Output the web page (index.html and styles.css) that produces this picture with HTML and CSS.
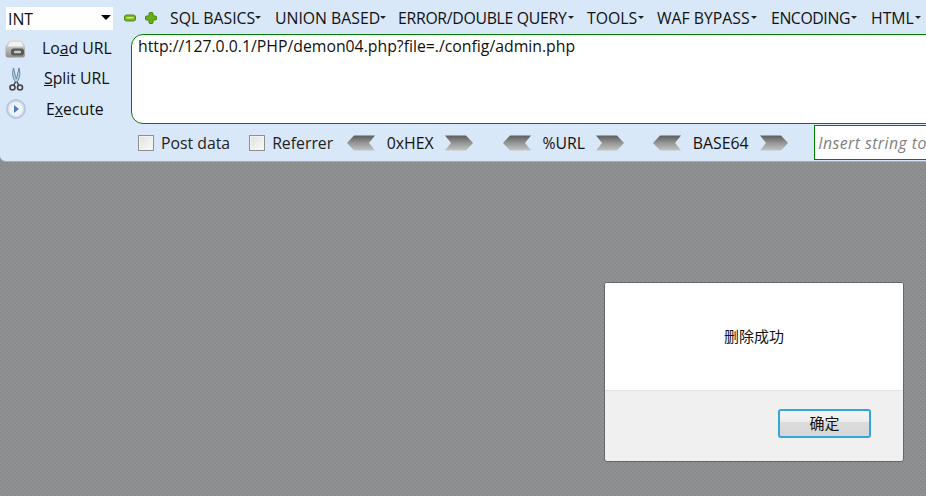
FILE: index.html
```html
<!doctype html>
<html lang="en">
  <head>
    <meta charset="UTF-8" />
    <title>HackBar</title>
    <link rel="stylesheet" href="styles.css">
  </head>
  <body>
    <div class="toolbar">
      <div class="top-row">
        <div class="select">INT<span class="select-arrow"></span></div>
        <svg class="zoom-icon" width="12" height="8" viewBox="0 0 12 8"><rect x="0.5" y="1" width="11" height="6" rx="2" fill="#7ab51d" stroke="#4f8a10"/><rect x="2.5" y="3" width="7" height="1.5" fill="#c8e68a"/></svg>
        <svg class="zoom-icon plus" width="12" height="12" viewBox="0 0 12 12"><path d="M4 1.5Q4 .5 5 .5h2q1 0 1 1V4h2.500q1 0 1 1v2q0 1-1 1H8v2.500q0 1-1 1H5q-1 0-1-1V8H1.500q-1 0-1-1V5q0-1 1-1H4z" fill="#6cae18" stroke="#3f8a0c"/></svg>
        <ul class="menu">
          <li class="sql">SQL BASICS</li>
          <li class="union">UNION BASED</li>
          <li class="error">ERROR/DOUBLE QUERY</li>
          <li class="tools">TOOLS</li>
          <li class="waf">WAF BYPASS</li>
          <li class="enc">ENCODING</li>
          <li class="html">HTML</li>
        </ul>
      </div>

      <div class="main-row">
        <div class="actions">
          <div class="action">
            <svg width="22" height="20" viewBox="0 0 22 20">
              <defs><linearGradient id="pr" x1="0" y1="0" x2="0" y2="1"><stop offset="0" stop-color="#e0e0e0"/><stop offset="1" stop-color="#8f8f8f"/></linearGradient></defs>
              <path d="M4.500 1h12l3.500 6.500V16a2.500 2.500 0 0 1-2.500 2.500h-15A2.500 2.500 0 0 1 .5 16V7.500z" fill="url(#pr)"/>
              <path d="M2.500 7.500L5 3h11l2.500 4.500z" fill="#f2f2f2"/>
              <rect x="6" y="9.500" width="13" height="7" rx="2.500" fill="#5a5a5a"/>
              <rect x="9" y="11.800" width="7" height="2.400" rx="1" fill="#c9c9c9"/>
            </svg>
            <span class="label load">Lo<u>a</u>d URL</span>
          </div>
          <div class="action">
            <svg width="22" height="24" viewBox="0 0 22 24">
              <path d="M8.500 1C7 6 7.500 11 10.500 15H12C15 11 15.500 6 14 1C13 5 12.300 9 11.300 12C10.300 9 9.500 5 8.500 1z" fill="#b6d2e8" stroke="#64849e"/>
              <path d="M10.500 15l-2 3.500M12 15l2 3.500" stroke="#444" stroke-width="1.500"/>
              <circle cx="7.500" cy="20.500" r="2.500" fill="none" stroke="#444" stroke-width="1.600"/>
              <circle cx="15" cy="20.500" r="2.500" fill="none" stroke="#444" stroke-width="1.600"/>
            </svg>
            <span class="label split"><u>S</u>plit URL</span>
          </div>
          <div class="action">
            <svg width="22" height="22" viewBox="0 0 22 22">
              <defs><radialGradient id="pl" cx="0.500" cy="0.500" r="0.500"><stop offset="0" stop-color="#ffffff"/><stop offset="0.700" stop-color="#e8eef8"/><stop offset="1" stop-color="#a8bcd8"/></radialGradient></defs>
              <circle cx="11" cy="11" r="9.500" fill="url(#pl)" stroke="#b4c8e2"/>
              <path d="M9 7l5 4-5 4z" fill="#4c7cc0"/>
            </svg>
            <span class="label execute">E<u>x</u>ecute</span>
          </div>
        </div>
        <textarea class="url" spellcheck="false">http://127.0.0.1/PHP/demon04.php?file=./config/admin.php</textarea>
      </div>

      <div class="bottom-row">
        <label class="check"><input type="checkbox" />Post data</label>
        <label class="check referrer"><input type="checkbox" />Referrer</label>
        <div class="codec hex">
          <svg width="28" height="16" viewBox="0 0 28 16"><use href="#chev-left"/></svg>
          <span>0xHEX</span>
          <svg width="28" height="16" viewBox="0 0 28 16"><use href="#chev-right"/></svg>
        </div>
        <div class="codec urlenc">
          <svg width="28" height="16" viewBox="0 0 28 16"><use href="#chev-left"/></svg>
          <span>%URL</span>
          <svg width="28" height="16" viewBox="0 0 28 16"><use href="#chev-right"/></svg>
        </div>
        <div class="codec base">
          <svg width="28" height="16" viewBox="0 0 28 16"><use href="#chev-left"/></svg>
          <span>BASE64</span>
          <svg width="28" height="16" viewBox="0 0 28 16"><use href="#chev-right"/></svg>
        </div>
        <input class="insert" type="text" placeholder="Insert string to replace" />
      </div>
    </div>

    <svg class="defs" width="0" height="0">
      <defs>
        <linearGradient id="chev" x1="0" y1="0" x2="0" y2="1">
          <stop offset="0" stop-color="#5c5c5c"/>
          <stop offset="0.500" stop-color="#969696"/>
          <stop offset="1" stop-color="#c4c4c4"/>
        </linearGradient>
        <path id="chev-left" d="M7 0.500H28L22 8l6 7.500H7L0 8z" fill="url(#chev)"/>
        <path id="chev-right" d="M0 0.500H21L28 8l-7 7.500H0L6 8z" fill="url(#chev)"/>
      </defs>
    </svg>

    <div class="dialog">
      <div class="dialog-body">删除成功</div>
      <div class="dialog-foot">
        <button class="ok">确定</button>
      </div>
    </div>
  </body>
</html>
```

FILE: styles.css
```css
html,
body {
  margin: 0;
  padding: 0;
  height: 100%;
  overflow: hidden;
}

body {
  font-family: "Open Sans", "Noto Sans CJK SC", sans-serif;
  color: #111;
  background-color: #8c8d8e;
  background-image: repeating-conic-gradient(#909192 0 25%, #8a8b8c 0 50%);
  background-size: 4px 4px;
}

.toolbar {
  width: 926px;
  height: 161px;
  box-sizing: content-box;
  background: #d9e8f8;
  border-bottom: 1px solid #a3adb8;
  border-bottom-left-radius: 6px;
  overflow: hidden;
  font-size: 15.8px;
}

/* top row */
.top-row {
  display: flex;
  align-items: center;
  height: 34px;
  padding-left: 6px;
  white-space: nowrap;
}

.select {
  position: relative;
  width: 105px;
  height: 23px;
  line-height: 24px;
  padding-left: 2px;
  background: #fff;
  margin-top: 2px;
}

.select-arrow {
  position: absolute;
  top: 8px;
  right: 2px;
  border: 5px solid transparent;
  border-top: 5px solid #000;
}

.zoom-icon {
  margin-left: 11px;
  margin-top: 2px;
  flex: none;
}

.zoom-icon.plus {
  margin-left: 9px;
}

.menu {
  display: flex;
  list-style: none;
  margin: 2px 0 0;
  padding: 0;
}

.menu li {
  position: relative;
  flex: none;
}

.menu li::after {
  content: "";
  position: absolute;
  top: 9px;
  right: -6px;
  border: 3px solid transparent;
  border-top: 3px solid #222;
}

.sql { margin-left: 13px; width: 85px; }
.union { margin-left: 20px; width: 105px; }
.error { margin-left: 18px; width: 170px; letter-spacing: -0.3px; }
.tools { margin-left: 19px; width: 51px; }
.waf { margin-left: 19px; width: 94px; }
.enc { margin-left: 20px; width: 80px; letter-spacing: -0.4px; }
.html { margin-left: 20px; width: 44px; }

/* url row */
.main-row {
  display: flex;
  height: 90px;
}

.actions {
  flex: none;
  width: 131px;
  display: flex;
  flex-direction: column;
}

.action {
  position: relative;
  display: flex;
  align-items: center;
  height: 31px;
  padding-left: 5px;
}

.action svg {
  flex: none;
}

.label {
  position: absolute;
  top: 3px;
}

.load { left: 42px; }
.split { left: 44px; }
.execute { left: 46px; top: 4px; }

.url {
  flex: none;
  width: 860px;
  height: 90px;
  box-sizing: border-box;
  margin: 0;
  padding: 0 6px;
  resize: none;
  outline: none;
  overflow: hidden;
  background: #fff;
  border: 1px solid #008000;
  border-radius: 12px;
  font: inherit;
  color: #111;
}

/* bottom row */
.bottom-row {
  display: flex;
  align-items: center;
  height: 37px;
  padding-left: 138px;
  white-space: nowrap;
}

.check {
  display: flex;
  align-items: center;
  gap: 7px;
  color: #222;
}

.check input {
  appearance: none;
  width: 16px;
  height: 16px;
  margin: 0;
  background: linear-gradient(135deg, #e0e0e0, #fbfbfb);
  border: 1px solid #8e8f8f;
  box-shadow: inset 0 0 0 1px #f4f4f4;
}

.referrer {
  margin-left: 19px;
}

.codec {
  display: flex;
  align-items: center;
  flex: none;
}

.codec span {
  text-align: center;
}

.hex { margin-left: 14px; }
.hex span { width: 70px; }
.urlenc { margin-left: 30px; }
.urlenc span { width: 65px; }
.base { margin-left: 29px; }
.base span { width: 79px; }

.insert {
  flex: none;
  width: 200px;
  height: 35px;
  box-sizing: border-box;
  margin-left: 26px;
  padding: 0 3px;
  outline: none;
  background: #fff;
  border: 1px solid #008000;
  font: inherit;
}

.insert::placeholder {
  color: #808080;
  font-style: italic;
  letter-spacing: 0.45px;
  opacity: 1;
}

.defs {
  position: absolute;
}

/* alert dialog */
.dialog {
  position: absolute;
  left: 604px;
  top: 282px;
  width: 298px;
  height: 178px;
  display: flex;
  flex-direction: column;
  background: #f0f0f0;
  border: 1px solid #666;
  border-radius: 3px;
  overflow: hidden;
  font-family: "Noto Sans CJK SC", sans-serif;
  font-size: 15px;
}

.dialog-body {
  height: 105px;
  padding-bottom: 2px;
  display: flex;
  align-items: center;
  justify-content: center;
  background: #fff;
  border-bottom: 1px solid #e3e3e3;
  color: #111;
}

.dialog-foot {
  flex: 1;
  display: flex;
  justify-content: flex-end;
  align-items: flex-start;
  padding: 18px 32px 0 0;
}

.ok {
  width: 93px;
  height: 29px;
  padding: 0 0 2px;
  border: 2px solid #35a6dc;
  border-radius: 3px;
  background: linear-gradient(#f5f5f5, #ececec 45%, #dcdcdc 45%, #d6d6d6);
  font: inherit;
  color: #111;
}
```
